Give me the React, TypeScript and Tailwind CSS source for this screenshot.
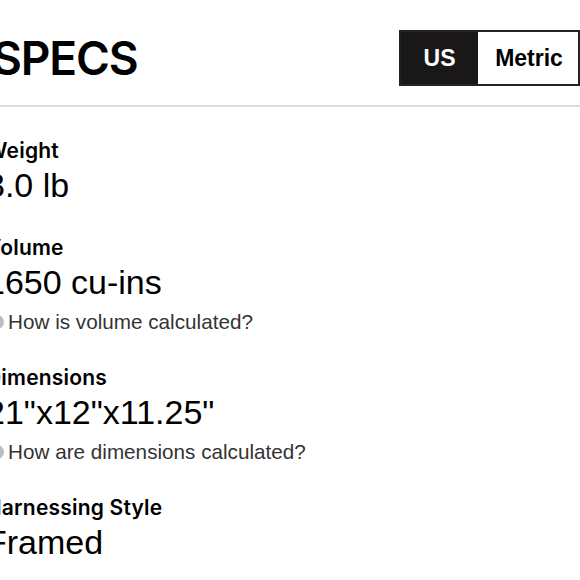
const specs = [
  { label: "Weight", value: "3.0 lb" },
  { label: "Volume", value: "1650 cu-ins", help: "How is volume calculated?" },
  { label: "Dimensions", value: '21"x12"x11.25"', help: "How are dimensions calculated?" },
  { label: "Harnessing Style", value: "Framed" },
];

export default function App() {
  return (
    <div className="h-[580px] w-[580px] overflow-hidden bg-white text-black">
      <div className="flex items-center justify-between border-b-2 border-[#dcdcdc] pb-[19px] pt-[30px]">
        <h1 className="ml-[-8px] font-['Inter',sans-serif] text-[46px] font-semibold leading-none tracking-tight">
          SPECS
        </h1>
        <div className="flex h-[56px] border-2 border-[#222]">
          <button className="w-[77px] bg-[#1a1718] font-['Liberation_Sans',sans-serif] text-[23px] font-bold text-white">
            US
          </button>
          <button className="w-[100px] bg-white pl-[2px] font-['Liberation_Sans',sans-serif] text-[23px] font-bold">
            Metric
          </button>
        </div>
      </div>
      <div className="ml-[-14px] flex flex-col gap-[29px] pt-[30px]">
        {specs.map((s) => (
          <div key={s.label} className="flex flex-col">
            <span className="font-['Inter',sans-serif] text-[21px] font-semibold leading-[28px] tracking-[0.2px]">
              {s.label}
            </span>
            <span className="font-['Liberation_Sans',sans-serif] text-[34px] leading-[40px]">
              {s.value}
            </span>
            {s.help && (
              <span className="mt-[7px] flex items-center gap-[4px] font-['Liberation_Sans',sans-serif] text-[20.7px] leading-[26px] text-[#333]">
                <span className="ml-[4px] h-[14px] w-[14px] shrink-0 rounded-full bg-[#bdbdbd]" />
                {s.help}
              </span>
            )}
          </div>
        ))}
      </div>
    </div>
  );
}
